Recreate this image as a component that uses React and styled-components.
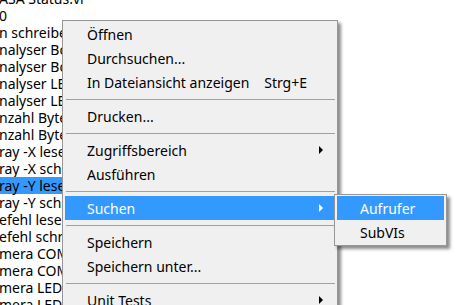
import React from "react";
import styled, { createGlobalStyle } from "styled-components";

const Global = createGlobalStyle`
  html, body { margin: 0; padding: 0; background: #fff; }
  body { font-family: "Noto Sans", "Open Sans", sans-serif; }
`;

const Page = styled.div`
  position: relative;
  width: 466px;
  height: 305px;
  overflow: hidden;
  background: #fff;
`;

const List = styled.div`
  display: flex;
  flex-direction: column;
  align-items: flex-start;
  margin-top: -10px;
`;

const ListRow = styled.div`
  height: 17px;
  line-height: 17px;
  font-size: 14px;
  color: #000;
  white-space: nowrap;
  margin-left: -1px;
  padding-right: 2px;
  background: ${(p) => (p.$selected ? "#3399ff" : "transparent")};
`;

const Menu = styled.div`
  position: absolute;
  left: ${(p) => p.$left}px;
  top: ${(p) => p.$top}px;
  width: ${(p) => p.$width}px;
  box-sizing: border-box;
  background: #f0f0f0;
  border: 1px solid #979797;
  padding: 1px 2px 1px 2px;
  box-shadow: 3px 3px 3px rgba(0, 0, 0, 0.45);
  display: flex;
  flex-direction: column;
`;

const Item = styled.div`
  height: 24px;
  display: flex;
  align-items: center;
  padding-left: ${(p) => p.$indent}px;
  padding-right: 12px;
  font-size: 14px;
  white-space: nowrap;
  color: ${(p) => (p.$active ? "#ffffff" : "#000000")};
  background: ${(p) => (p.$active ? "#3399ff" : "transparent")};
`;

const Label = styled.span`
  flex: 1;
`;

const Shortcut = styled.span``;

const ArrowSlot = styled.span`
  width: 16px;
  display: flex;
  justify-content: flex-end;
  align-items: center;
`;

const Separator = styled.div`
  height: 10px;
  display: flex;
  align-items: center;
  padding-left: 1px;
  &::after {
    content: "";
    flex: 1;
    height: 1px;
    background: #a0a0a0;
  }
`;

const Arrow = ({ color }) => (
  <svg width="4" height="8" viewBox="0 0 4 8">
    <path d="M0 0 L4 4 L0 8 Z" fill={color} />
  </svg>
);

const rows = [
  "ASA Status.vi",
  "0",
  "n schreiben.vi",
  "nalyser Bohrung.vi",
  "nalyser Bohrung.vi",
  "nalyser LED.vi",
  "nalyser LED.vi",
  "nzahl Bytes.vi",
  "nzahl Bytes.vi",
  "ray -X lesen.vi",
  "ray -X schreiben.vi",
  "ray -Y lesen.vi",
  "ray -Y schreiben.vi",
  "efehl lesen.vi",
  "efehl schreiben.vi",
  "mera COM.vi",
  "mera COM.vi",
  "mera LED.vi",
  "mera LED.vi",
];

const mainItems = [
  { label: "Öffnen" },
  { label: "Durchsuchen..." },
  { label: "In Dateiansicht anzeigen", shortcut: "Strg+E" },
  { sep: true },
  { label: "Drucken..." },
  { sep: true },
  { label: "Zugriffsbereich", sub: true },
  { label: "Ausführen" },
  { sep: true },
  { label: "Suchen", sub: true, active: true },
  { sep: true },
  { label: "Speichern" },
  { label: "Speichern unter..." },
  { sep: true },
  { label: "Unit Tests", sub: true },
];

const subItems = [
  { label: "Aufrufer", active: true },
  { label: "SubVIs" },
];

export default function App() {
  return (
    <Page>
      <Global />
      <List>
        {rows.map((r, i) => (
          <ListRow key={i} $selected={i === 11}>
            {r}
          </ListRow>
        ))}
      </List>

      <Menu $left={62} $top={20} $width={276}>
        {mainItems.map((it, i) =>
          it.sep ? (
            <Separator key={i} />
          ) : (
            <Item key={i} $indent={22} $active={it.active}>
              <Label>{it.label}</Label>
              {it.shortcut && <Shortcut>{it.shortcut}</Shortcut>}
              <ArrowSlot>
                {it.sub && <Arrow color={it.active ? "#ffffff" : "#000000"} />}
              </ArrowSlot>
            </Item>
          )
        )}
      </Menu>

      <Menu $left={334} $top={194} $width={113}>
        {subItems.map((it, i) => (
          <Item key={i} $indent={23} $active={it.active}>
            <Label>{it.label}</Label>
          </Item>
        ))}
      </Menu>
    </Page>
  );
}
